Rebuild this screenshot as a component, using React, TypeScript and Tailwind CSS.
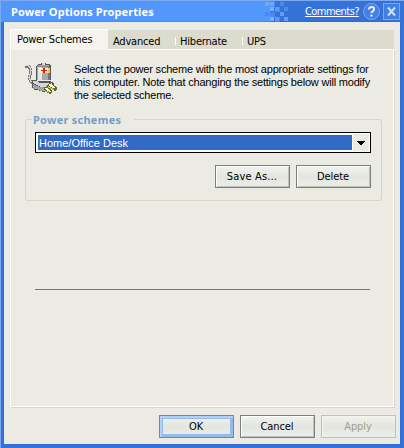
import React from "react";

function Plug() {
  return (
    <svg width="34" height="32" viewBox="0 0 34 32" shapeRendering="crispEdges" className="block">
      <path d="M0 4h3l2 2 1 3-1 4-1 3 2 4 6 3" fill="none" stroke="#77777b" strokeWidth="3" />
      <path d="M0 3.500h3l2 2 1 3-1 4-1 3 2 4 5 2" fill="none" stroke="#d5d5d8" strokeWidth="1.300" />
      <path d="M11 4l3-2h2V1h5v1h3l2 2v14H11z" fill="#56565a" />
      <path d="M12 4l2-1h9l2 1v14H12z" fill="#a9a9ad" />
      <path d="M13 5h4v13h-4z" fill="#e6e6e8" />
      <path d="M17 1h3v2h-3z" fill="#d7d7d9" />
      <path d="M23 4h2v14h-2z" fill="#77777b" />
      <path d="M13 4h10v1H13z" fill="#848488" />
      <path d="M14 6h10v5H14z" fill="#fff4b7" />
      <path d="M23 6h2v5h-2z" fill="#e7c85c" />
      <path d="M18 6h2v2h2v1h-2v2h-2V9h-2V8h2z" fill="#ec1717" />
      <path d="M7 18h5v1h13l4 2v3l-8 6h-3l-5-2H9l-2-2z" fill="#58585c" />
      <path d="M8 19h4l2 2h12l1 1-7 3h-4l-8-4z" fill="#d6d6d9" />
      <path d="M8 22l7 3h4v4h-3l-4-2H8z" fill="#a2a2a7" />
      <path d="M19 26l6-4 2 1-7 6z" fill="#818186" />
      <path d="M23 22l2-1 7 4v2l-2 2-8-4z" fill="#66643f" />
      <path d="M24 22h2l4 3v1h-2l-4-2z" fill="#fffec0" />
      <path d="M23 24l6 3-1 1-6-3z" fill="#c6c15f" />
      <path d="M19 26l2-1 6 3v2l-2 2-6-3z" fill="#66643f" />
      <path d="M20 26h2l4 3-1 1-5-3z" fill="#fffec0" />
      <path d="M19 28l5 2v1l-5-2z" fill="#c6c15f" />
    </svg>
  );
}

const pixels = [
  [5, 2, "#72a6fa"], [10, 2, "#72a6fa"], [20, 2, "#5288e6"],
  [10, 7, "#79b0ff"], [15, 7, "#5c98f8"], [24, 7, "#5288e6"],
  [5, 12, "#488af3"], [20, 12, "#659cf8"],
  [10, 17, "#79b0ff"], [15, 17, "#5998f8"], [24, 17, "#659cf8"],
] as const;

function PixelFade() {
  return (
    <svg width="38" height="22" viewBox="0 0 38 22" shapeRendering="crispEdges" className="block">
      <path d="M0 1h10v21H0z" fill="#5297fb" />
      <path d="M10 1h5v6h-5zM10 12h5v5h-5zM15 7h5v5h-5zM15 17h5v5h-5z" fill="#468af1" />
      {pixels.map(([x, y, color]) => <rect key={`${x}-${y}`} x={x} y={y} width="4" height="4" fill={color} />)}
    </svg>
  );
}

function Button({ children, className = "" }: { children: React.ReactNode; className?: string }) {
  return (
    <button className={`flex h-[23px] w-[75px] items-center justify-center border border-[#7d7f7d] bg-linear-to-b from-[#f1f3ee] via-[#e3e6df] to-[#ecefe9] pt-px pr-px text-[11px] leading-[14px] tracking-[-0.1px] shadow-[inset_1px_1px_0_#fff,inset_-1px_-1px_0_#bfc2bd] ${className}`}>
      {children}
    </button>
  );
}

export default function App() {
  return (
    <main className="flex h-[448px] w-[404px] flex-col overflow-hidden border-t border-l border-[#7baaf2] bg-[#3572d8] font-['DejaVu_Sans_Condensed','DejaVu_Sans',sans-serif] text-black">
      <header className="flex h-[21px] shrink-0 bg-[#3572d8]">
        <div className="flex h-[21px] w-[259px] shrink-0 items-center bg-[#5297fb] pl-[10px]">
          <h1 className="font-['Noto_Sans',sans-serif] text-[11px] leading-[14px] font-bold tracking-[0.1px] whitespace-nowrap text-white">Power Options Properties</h1>
        </div>
        <div className="-mt-px h-[22px] w-[38px] shrink-0"><PixelFade /></div>
        <a className="ml-[7px] pt-[4px] text-[11px] leading-[14px] tracking-[-0.55px] whitespace-nowrap text-white underline underline-offset-1">Comments?</a>
        <svg width="37" height="20" viewBox="0 0 37 20" className="mt-[1px] mr-[4px] ml-auto shrink-0">
          <circle cx="8.5" cy="9.5" r="8" fill="#4681e2" stroke="#77a8f5" />
          <path d="M6 7.500Q6 5 8.600 5T11 7.200Q11 8.500 9.500 9.500Q8.500 10.200 8.500 11" fill="none" stroke="#e8f3ff" strokeWidth="2" />
          <path d="M7.500 12.500h2v2h-2z" fill="#e8f3ff" />
          <rect x="20.500" y="1.500" width="16" height="16" fill="#437fe0" stroke="#77a8f5" />
          <path d="M25 5.500l7 8M32 5.500l-7 8" stroke="#cce0ff" strokeWidth="2" />
        </svg>
      </header>
      <section className="ml-[3px] flex h-[422px] w-[396px] shrink-0 flex-col bg-[#ebeae3] shadow-[0_0_1px_#174cac]">
        <nav className="mt-[7px] ml-[6px] flex h-[21px] w-[384px] items-end text-[11px] leading-[14px] tracking-[-0.2px] whitespace-nowrap">
          <div className="h-[21px] w-[98px] rounded-t-[2px] border-t border-l border-white bg-[#f4f3ee] pt-[3px] pl-[6px]">Power Schemes</div>
          <div className="flex h-[20px] w-[286px] border-b border-white bg-[#dbdbce] pt-[5px]">
            <div className="flex w-[67px] pl-[5px]">Advanced</div>
            <div className="flex w-[67px]"><span className="mt-[2px] mr-[4px] h-[8px] border-l border-white" />Hibernate</div>
            <div className="flex"><span className="mt-[2px] mr-[4px] h-[8px] border-l border-white" />UPS</div>
          </div>
        </nav>
        <div className="ml-[6px] h-[357px] w-[384px] border-r border-b border-l border-white shadow-[1px_1px_0_#d6d5cc]">
          <div className="flex h-[52px] pt-[12px] pl-[14px]">
            <Plug />
            <div className="ml-[15px] pt-[1px] font-['Liberation_Sans',sans-serif] text-[11px] leading-[13px] tracking-[-0.2px] whitespace-nowrap">
              <p>Select the power scheme with the most appropriate settings for</p>
              <p>this computer. Note that changing the settings below will modify</p>
              <p>the selected scheme.</p>
            </div>
          </div>
          <fieldset className="mt-[11px] ml-[14px] h-[88px] w-[357px] min-w-0">
            <div className="flex h-[14px] items-end">
              <span className="h-[8px] w-[7px] rounded-tl-[3px] border-t border-l border-[#d6d5ca]" />
              <span className="w-[102px] pl-px font-['Noto_Sans',sans-serif] text-[11px] leading-[14px] font-bold tracking-[0.25px] whitespace-nowrap text-[#759dca]">Power schemes</span>
              <span className="h-[8px] flex-1 rounded-tr-[3px] border-t border-r border-[#d6d5ca]" />
            </div>
            <div className="h-[74px] rounded-b-[3px] border-r border-b border-l border-[#d6d5ca] px-[9px] pt-[5px]">
              <div className="flex h-[21px] w-[336px] border border-black bg-white p-[2px] pr-px pb-[2px]">
                <div className="h-[15px] w-[314px] bg-[#316ac5] pl-px font-['Liberation_Sans',sans-serif] text-[11px] leading-[16px] text-white">Home/Office Desk</div>
                <div className="-mt-px ml-px flex h-[17px] w-[16px] items-center justify-center bg-[#ebeae3] pt-px">
                  <svg width="8" height="4" shapeRendering="crispEdges"><path d="M0 0h8v1H7v1H6v1H5v1H3V3H2V2H1V1H0z" /></svg>
                </div>
              </div>
              <div className="mt-[12px] mr-px flex justify-end gap-[6px]"><Button className="tracking-[0.15px]!">Save As...</Button><Button>Delete</Button></div>
            </div>
          </fieldset>
          <div className="mt-[88px] ml-[24px] h-px w-[335px] bg-[#77776f]" />
        </div>
        <footer className="mt-[8px] mr-[4px] flex justify-end gap-[6px]">
          <Button className="border-[#7187af]! shadow-[inset_1px_1px_0_1px_#b3d1f7,inset_0_0_0_3px_#94b9ea]!">OK</Button>
          <Button>Cancel</Button>
          <Button className="border-[#bfc1ba]! text-[#9e9f8c] shadow-[inset_1px_1px_0_#f4f4ed]!">Apply</Button>
        </footer>
      </section>
    </main>
  );
}
